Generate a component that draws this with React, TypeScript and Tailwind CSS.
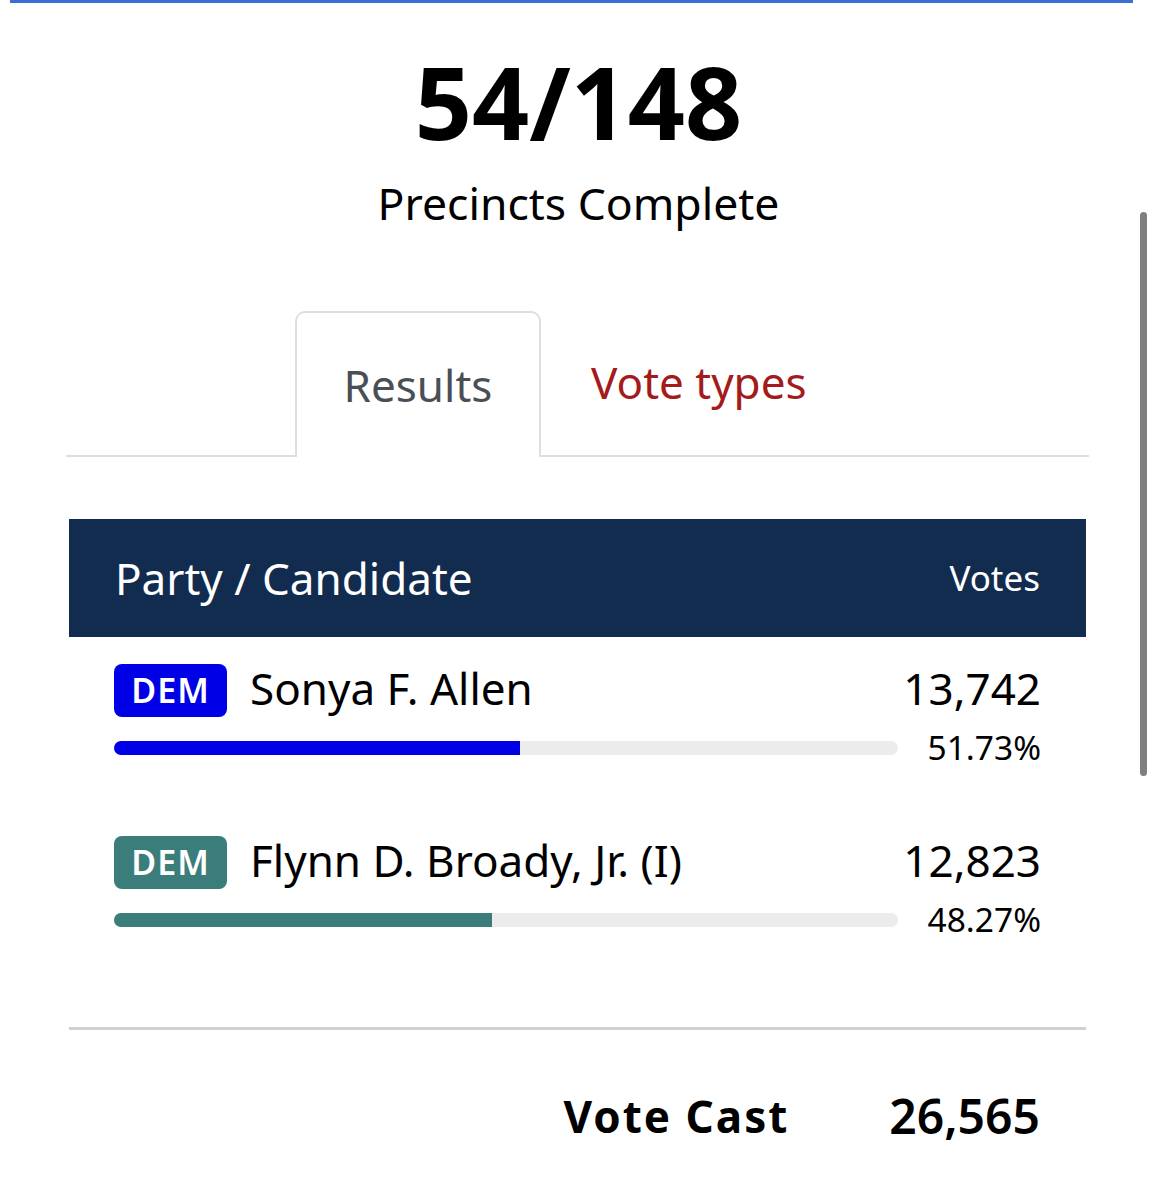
import React from "react";

const font = { fontFamily: '"Noto Sans", "Open Sans", sans-serif' };

function Row({ color, name, votes, pct }: { color: string; name: string; votes: string; pct: number }) {
  return (
    <div className="flex flex-col">
      <div className="flex items-center justify-between h-[53px]">
        <div className="flex items-center">
          <span
            className="h-[53px] w-[113px] rounded-[8px] text-white font-semibold text-[34px] flex items-center justify-center tracking-[1px]"
            style={{ backgroundColor: color }}
          >
            DEM
          </span>
          <span className="ml-[23px] text-[44px] text-black leading-none -mt-[6px]">{name}</span>
        </div>
        <span className="text-[44px] text-black leading-none -mt-[6px]">{votes}</span>
      </div>
      <div className="flex items-center justify-between mt-[24px] h-[14px]">
        <div className="w-[784px] h-[14px] rounded-full bg-[#ececec] overflow-hidden">
          <div className="h-full" style={{ width: `${pct}%`, backgroundColor: color }} />
        </div>
        <span className="text-[33.5px] text-black leading-none">{pct.toFixed(2)}%</span>
      </div>
    </div>
  );
}

export default function App() {
  return (
    <div className="relative w-[1157px] h-[1200px] bg-white overflow-hidden" style={font}>
      <div className="mx-[10px] w-[1123px] h-[3px] bg-[#3b6fd6]" />
      <div className="absolute right-[10px] top-[212px] w-[7px] h-[564px] rounded-full bg-[#7f7f7f]" />
      <div className="flex flex-col items-center pt-[38px]">
        <div className="text-[100px] font-bold leading-[120px] text-black">54/148</div>
        <div className="text-[44.5px] leading-[60px] text-black mt-[12px]">Precincts Complete</div>
      </div>
      <div className="mx-[66px] w-[1023px] mt-[78px] flex items-end border-b-2 border-[#dedede] h-[146px]">
        <div className="ml-[229px] w-[246px] h-[146px] -mb-[2px] border-2 border-b-0 border-[#dedede] rounded-t-[10px] bg-white flex items-center justify-center text-[44px] text-[#4a4f55]">
          Results
        </div>
        <div className="h-[146px] flex items-center pl-[50px] text-[44px] text-[#a31b1b]">Vote types</div>
      </div>
      <div className="mx-[69px] w-[1017px] mt-[62px]">
        <div className="h-[118px] bg-[#122c4f] flex items-center justify-between px-[46px] text-white">
          <span className="text-[44px]">Party / Candidate</span>
          <span className="text-[35px]">Votes</span>
        </div>
        <div className="px-[45px] pt-[27px] flex flex-col gap-[81px]">
          <Row color="#0000e6" name="Sonya F. Allen" votes="13,742" pct={51.73} />
          <Row color="#3a7d7a" name="Flynn D. Broady, Jr. (I)" votes="12,823" pct={48.27} />
        </div>
        <div className="mt-[100px] h-[3px] bg-[#d0d0d0]" />
        <div className="flex justify-end items-center pr-[46px] mt-[50px] gap-[100px]">
          <span className="text-[44px] font-bold text-black tracking-[2px]">Vote Cast</span>
          <span className="text-[48px] font-semibold text-black">26,565</span>
        </div>
      </div>
    </div>
  );
}
